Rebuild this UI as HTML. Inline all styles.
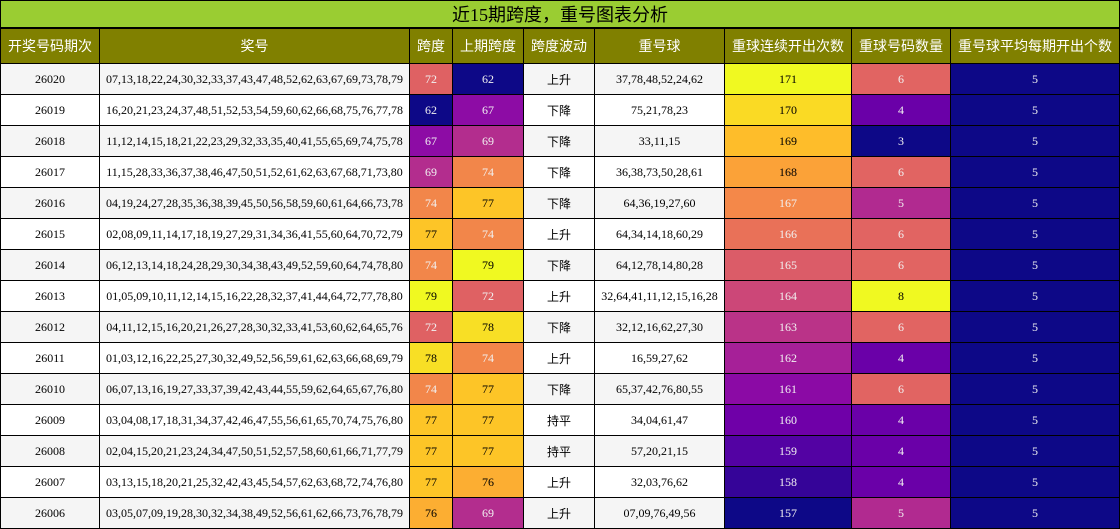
<!DOCTYPE html>
<html lang="zh">
<head>
<meta charset="utf-8">
<title>近15期跨度，重号图表分析</title>
<style>
html,body{margin:0;padding:0;background:#fff;width:1120px;height:529px;overflow:hidden}
body{font-family:"Liberation Serif","WenQuanYi Zen Hei",serif;color:#000;position:relative}
.t{position:absolute;left:0;top:0;width:1120px;height:28px;box-sizing:border-box;border:1px solid #000;background:#9acd32;font-size:18px;line-height:28px;text-align:center}
table{position:absolute;left:0;top:28px;width:1120px;border-collapse:collapse;table-layout:fixed;font-size:12px}
th,td{border:1px solid #000;padding:0;text-align:center;white-space:nowrap;overflow:hidden}
th{background:#808000;color:#fff;font-size:14px;font-weight:normal;height:34px}
td{height:30px}
tr:nth-child(odd) td{background:#f5f5f5}
tr:nth-child(even) td{background:#fff}
tr td.w{color:#f1f1f1}
</style>
</head>
<body>
<div class="t">近15期跨度，重号图表分析</div>
<table>
<colgroup><col style="width:99px"><col style="width:310px"><col style="width:43px"><col style="width:71px"><col style="width:71px"><col style="width:130px"><col style="width:127px"><col style="width:99px"><col style="width:169px"></colgroup>
<thead><tr><th>开奖号码期次</th><th>奖号</th><th>跨度</th><th>上期跨度</th><th>跨度波动</th><th>重号球</th><th>重球连续开出次数</th><th>重球号码数量</th><th>重号球平均每期开出个数</th></tr></thead>
<tbody>
<tr><td>26020</td><td>07,13,18,22,24,30,32,33,37,43,47,48,52,62,63,67,69,73,78,79</td><td class="w" style="background:#df6163">72</td><td class="w" style="background:#0d0887">62</td><td>上升</td><td>37,78,48,52,24,62</td><td style="background:#f0f921">171</td><td class="w" style="background:#e16462">6</td><td class="w" style="background:#0d0887">5</td></tr>
<tr><td>26019</td><td>16,20,21,23,24,37,48,51,52,53,54,59,60,62,66,68,75,76,77,78</td><td class="w" style="background:#0d0887">62</td><td class="w" style="background:#8d0ca5">67</td><td>下降</td><td>75,21,78,23</td><td style="background:#fada24">170</td><td class="w" style="background:#6a00a8">4</td><td class="w" style="background:#0d0887">5</td></tr>
<tr><td>26018</td><td>11,12,14,15,18,21,22,23,29,32,33,35,40,41,55,65,69,74,75,78</td><td class="w" style="background:#8d0ca5">67</td><td class="w" style="background:#b32d8e">69</td><td>下降</td><td>33,11,15</td><td style="background:#febd2a">169</td><td class="w" style="background:#0d0887">3</td><td class="w" style="background:#0d0887">5</td></tr>
<tr><td>26017</td><td>11,15,28,33,36,37,38,46,47,50,51,52,61,62,63,67,68,71,73,80</td><td class="w" style="background:#b32d8e">69</td><td class="w" style="background:#f2864a">74</td><td>下降</td><td>36,38,73,50,28,61</td><td style="background:#fba238">168</td><td class="w" style="background:#e16462">6</td><td class="w" style="background:#0d0887">5</td></tr>
<tr><td>26016</td><td>04,19,24,27,28,35,36,38,39,45,50,56,58,59,60,61,64,66,73,78</td><td class="w" style="background:#f2864a">74</td><td style="background:#fdc527">77</td><td>下降</td><td>64,36,19,27,60</td><td class="w" style="background:#f48849">167</td><td class="w" style="background:#b12a90">5</td><td class="w" style="background:#0d0887">5</td></tr>
<tr><td>26015</td><td>02,08,09,11,14,17,18,19,27,29,31,34,36,41,55,60,64,70,72,79</td><td style="background:#fdc527">77</td><td class="w" style="background:#f2864a">74</td><td>上升</td><td>64,34,14,18,60,29</td><td class="w" style="background:#e97158">166</td><td class="w" style="background:#e16462">6</td><td class="w" style="background:#0d0887">5</td></tr>
<tr><td>26014</td><td>06,12,13,14,18,24,28,29,30,34,38,43,49,52,59,60,64,74,78,80</td><td class="w" style="background:#f2864a">74</td><td style="background:#f0f921">79</td><td>下降</td><td>64,12,78,14,80,28</td><td class="w" style="background:#db5c68">165</td><td class="w" style="background:#e16462">6</td><td class="w" style="background:#0d0887">5</td></tr>
<tr><td>26013</td><td>01,05,09,10,11,12,14,15,16,22,28,32,37,41,44,64,72,77,78,80</td><td style="background:#f0f921">79</td><td class="w" style="background:#df6163">72</td><td>上升</td><td>32,64,41,11,12,15,16,28</td><td class="w" style="background:#cc4778">164</td><td style="background:#f0f921">8</td><td class="w" style="background:#0d0887">5</td></tr>
<tr><td>26012</td><td>04,11,12,15,16,20,21,26,27,28,30,32,33,41,53,60,62,64,65,76</td><td class="w" style="background:#df6163">72</td><td style="background:#f8df25">78</td><td>下降</td><td>32,12,16,62,27,30</td><td class="w" style="background:#ba3388">163</td><td class="w" style="background:#e16462">6</td><td class="w" style="background:#0d0887">5</td></tr>
<tr><td>26011</td><td>01,03,12,16,22,25,27,30,32,49,52,56,59,61,62,63,66,68,69,79</td><td style="background:#f8df25">78</td><td class="w" style="background:#f2864a">74</td><td>上升</td><td>16,59,27,62</td><td class="w" style="background:#a62098">162</td><td class="w" style="background:#6a00a8">4</td><td class="w" style="background:#0d0887">5</td></tr>
<tr><td>26010</td><td>06,07,13,16,19,27,33,37,39,42,43,44,55,59,62,64,65,67,76,80</td><td class="w" style="background:#f2864a">74</td><td style="background:#fdc527">77</td><td>下降</td><td>65,37,42,76,80,55</td><td class="w" style="background:#8b0aa5">161</td><td class="w" style="background:#e16462">6</td><td class="w" style="background:#0d0887">5</td></tr>
<tr><td>26009</td><td>03,04,08,17,18,31,34,37,42,46,47,55,56,61,65,70,74,75,76,80</td><td style="background:#fdc527">77</td><td style="background:#fdc527">77</td><td>持平</td><td>34,04,61,47</td><td class="w" style="background:#6f00a8">160</td><td class="w" style="background:#6a00a8">4</td><td class="w" style="background:#0d0887">5</td></tr>
<tr><td>26008</td><td>02,04,15,20,21,23,24,34,47,50,51,52,57,58,60,61,66,71,77,79</td><td style="background:#fdc527">77</td><td style="background:#fdc527">77</td><td>持平</td><td>57,20,21,15</td><td class="w" style="background:#5302a3">159</td><td class="w" style="background:#6a00a8">4</td><td class="w" style="background:#0d0887">5</td></tr>
<tr><td>26007</td><td>03,13,15,18,20,21,25,32,42,43,45,54,57,62,63,68,72,74,76,80</td><td style="background:#fdc527">77</td><td style="background:#fcae32">76</td><td>上升</td><td>32,03,76,62</td><td class="w" style="background:#350498">158</td><td class="w" style="background:#6a00a8">4</td><td class="w" style="background:#0d0887">5</td></tr>
<tr><td>26006</td><td>03,05,07,09,19,28,30,32,34,38,49,52,56,61,62,66,73,76,78,79</td><td style="background:#fcae32">76</td><td class="w" style="background:#b32d8e">69</td><td>上升</td><td>07,09,76,49,56</td><td class="w" style="background:#0d0887">157</td><td class="w" style="background:#b12a90">5</td><td class="w" style="background:#0d0887">5</td></tr>
</tbody>
</table>
</body>
</html>
